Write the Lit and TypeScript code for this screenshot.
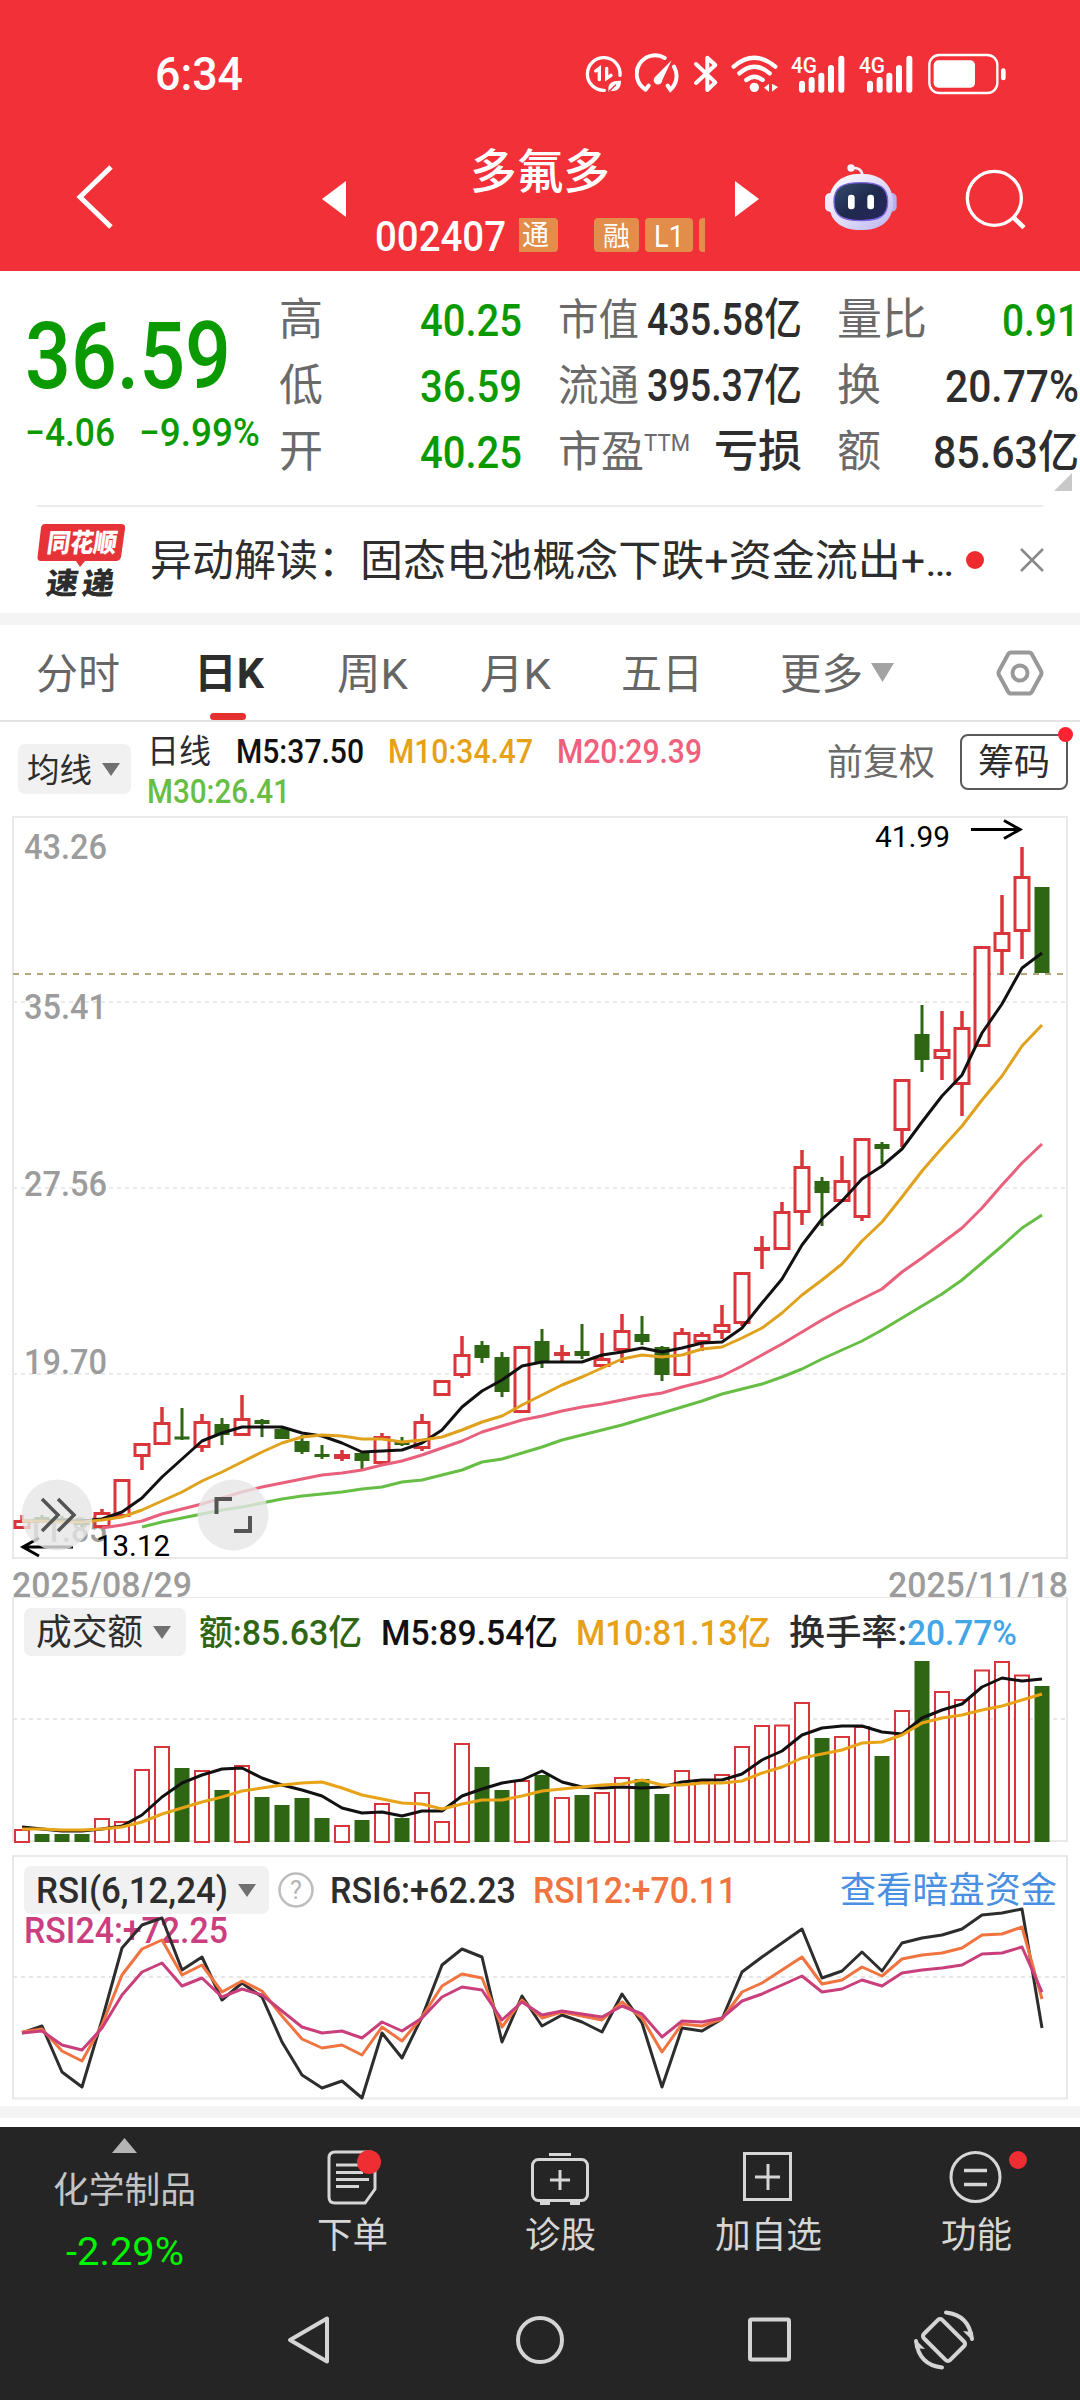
import { LitElement, html, svg, css } from "lit";
import { customElement } from "lit/decorators.js";

type Candle = [kind: "r" | "g", high: number, top: number, bottom: number, low: number];

const X0 = 22;
const STEP = 20;

/* Daily candles, in pane coordinates. */
const CANDLES: Candle[] = [
  ["r", 1515, 1520, 1529, 1529], ["g", 1515, 1517, 1520, 1522], ["g", 1516, 1518, 1520, 1523],
  ["g", 1519, 1522, 1525, 1527], ["r", 1509, 1512, 1528, 1528], ["r", 1479, 1479, 1517, 1517],
  ["r", 1443, 1443, 1457, 1470], ["r", 1407, 1422, 1445, 1445], ["g", 1408, 1436.5, 1439.5, 1440],
  ["r", 1414, 1421, 1448, 1452], ["g", 1418, 1424, 1435, 1445], ["r", 1395, 1418, 1436, 1436],
  ["g", 1419, 1420, 1424, 1437], ["g", 1428, 1429, 1439, 1439], ["g", 1435, 1441, 1452, 1454],
  ["g", 1445, 1454, 1457, 1459], ["r", 1450, 1454, 1459, 1461], ["g", 1453, 1453, 1461, 1469],
  ["r", 1433, 1436, 1464, 1464], ["g", 1437, 1442, 1445, 1446], ["r", 1414, 1421, 1449, 1451],
  ["r", 1380, 1380, 1396, 1396], ["r", 1336, 1354, 1376, 1378], ["g", 1341, 1345, 1358, 1363],
  ["g", 1352, 1357, 1392, 1397], ["r", 1346, 1346, 1413, 1413], ["g", 1329, 1341, 1363, 1368],
  ["r", 1345, 1352, 1356, 1361], ["g", 1324, 1351, 1356, 1359], ["r", 1333, 1358, 1367, 1367],
  ["r", 1314, 1330, 1351, 1363], ["g", 1316, 1334, 1342, 1345], ["g", 1346, 1347, 1375, 1381],
  ["r", 1328, 1332, 1376, 1376], ["r", 1332, 1334, 1343, 1351], ["r", 1305, 1324, 1333, 1339],
  ["r", 1272, 1272, 1324, 1326], ["r", 1236, 1247, 1251, 1269], ["r", 1202, 1211, 1250, 1250],
  ["r", 1150, 1166, 1213, 1225], ["g", 1177, 1181, 1193, 1226], ["r", 1156, 1180, 1202, 1202],
  ["r", 1138, 1138, 1218, 1221], ["g", 1142, 1144, 1149, 1164], ["r", 1079, 1079, 1131, 1147],
  ["g", 1005, 1034, 1060, 1072], ["r", 1011, 1049, 1059, 1080], ["r", 1011, 1027, 1085, 1116],
  ["r", 946, 946, 1047, 1047], ["r", 895, 932, 952, 975], ["r", 847, 876, 932, 959],
  ["g", 887, 887, 973, 973],
];

const MA5 = [1521, 1521, 1521, 1521, 1519, 1512, 1498, 1477, 1459, 1441, 1433, 1427, 1427, 1427, 1433, 1436, 1443, 1452, 1451, 1450, 1443, 1430, 1407, 1391, 1380, 1366, 1362, 1362, 1362, 1355, 1352, 1348, 1352, 1348, 1343, 1342, 1328, 1303, 1279, 1245, 1219, 1201, 1179, 1166, 1149, 1122, 1096, 1075, 1033, 1004, 968, 953];
const MA10 = [1521, 1521, 1522, 1522, 1520, 1517, 1510, 1501, 1492, 1481, 1472, 1462, 1452, 1443, 1437, 1435, 1436, 1439, 1439, 1442, 1440, 1437, 1430, 1422, 1416, 1405, 1395, 1385, 1377, 1368, 1359, 1355, 1357, 1355, 1349, 1347, 1338, 1328, 1313, 1295, 1280, 1264, 1241, 1222, 1197, 1171, 1148, 1126, 1100, 1076, 1046, 1025];
/* Starts at candle 4. */
const MA20 = [1528, 1525, 1521, 1514, 1509, 1504, 1498, 1492, 1487, 1483, 1479, 1475, 1473, 1470, 1465, 1461, 1455, 1448, 1441, 1432, 1426, 1420, 1416, 1411, 1407, 1404, 1400, 1396, 1393, 1387, 1382, 1376, 1366, 1355, 1344, 1332, 1320, 1309, 1299, 1289, 1272, 1258, 1243, 1228, 1208, 1185, 1163, 1144];
/* Starts at candle 6. */
const MA30 = [1527, 1522, 1518, 1514, 1510, 1507, 1503, 1499, 1496, 1494, 1492, 1489, 1487, 1482, 1480, 1475, 1470, 1462, 1459, 1453, 1447, 1440, 1435, 1430, 1425, 1419, 1413, 1407, 1401, 1394, 1389, 1384, 1377, 1369, 1359, 1350, 1341, 1330, 1318, 1306, 1294, 1280, 1263, 1246, 1228, 1215];

const VOL: number[] = [1829, 1834, 1834, 1834, 1818, 1821, 1769, 1746, 1768, 1770, 1790, 1765, 1797, 1805, 1798, 1818, 1825, 1820, 1803, 1818, 1792, 1821, 1743, 1767, 1790, 1780, 1775, 1797, 1795, 1792, 1777, 1779, 1794, 1770, 1780, 1774, 1746, 1725, 1724.5, 1702, 1738, 1736, 1726, 1756, 1710, 1661, 1691, 1699, 1669.5, 1661, 1674.5, 1686];
const VOL5 = [1827, 1829, 1831, 1831, 1829, 1826, 1815, 1797, 1783, 1775, 1769, 1768, 1778, 1785, 1790, 1796, 1808, 1813, 1812, 1816, 1811, 1811, 1796, 1789, 1783, 1780, 1771, 1782, 1787, 1788, 1787, 1788, 1787, 1782, 1780, 1780, 1774, 1760, 1751, 1735, 1728, 1726, 1726, 1732, 1734, 1718, 1710, 1704, 1687, 1678, 1681, 1679];
const VOL10 = [1829, 1829, 1830, 1830, 1829, 1827, 1822, 1814, 1808, 1802, 1797, 1791, 1788, 1785, 1783, 1782, 1788, 1795, 1799, 1803, 1804, 1809, 1804, 1800, 1800, 1796, 1791, 1789, 1787, 1785, 1784, 1780, 1785, 1785, 1783, 1783, 1781, 1773, 1767, 1758, 1754, 1750, 1743, 1742, 1735, 1723, 1718, 1715, 1710, 1706, 1700, 1694];

const RSI6 = [2033, 2026, 2072, 2087, 2020, 1948, 1925, 1918, 1970, 1957, 2000, 1983, 1997, 2042, 2075, 2088, 2081, 2098, 2033, 2058, 2017, 1965, 1949, 1957, 2042, 1996, 2026, 2015, 2022, 2032, 1994, 2023, 2087, 2028, 2031, 2019, 1972, 1957, 1943, 1929, 1978, 1971, 1952, 1971, 1943, 1938, 1935, 1929, 1915, 1913, 1909, 2028];
const RSI12 = [2032, 2029, 2051, 2061, 2025, 1975, 1949, 1940, 1975, 1965, 1992, 1981, 1991, 2016, 2039, 2048, 2045, 2055, 2027, 2041, 2017, 1986, 1974, 1978, 2027, 2000, 2018, 2012, 2016, 2020, 2002, 2018, 2052, 2024, 2026, 2019, 1992, 1983, 1970, 1957, 1984, 1980, 1967, 1976, 1959, 1955, 1953, 1948, 1935, 1934, 1927, 1999];
const RSI24 = [2033, 2031, 2045, 2050, 2028, 1995, 1972, 1963, 1986, 1978, 1997, 1989, 1995, 2011, 2027, 2033, 2031, 2038, 2022, 2031, 2018, 1997, 1987, 1990, 2020, 2002, 2015, 2011, 2014, 2017, 2006, 2014, 2037, 2021, 2022, 2018, 2001, 1994, 1985, 1976, 1992, 1989, 1980, 1986, 1973, 1970, 1968, 1965, 1954, 1953, 1947, 1992];

const points = (ys: number[], from = 0) =>
  ys.map((y, i) => `${X0 + STEP * (i + from)},${y}`).join(" ");

const line = (ys: number[], color: string, width: number, from = 0) =>
  svg`<polyline points=${points(ys, from)} fill="none" stroke=${color} stroke-width=${width} stroke-linejoin="round"/>`;

/* One line of text set to an exact width; colour and weight come from the class. */
const fit = (text: string, width: number, size: number, cls = "") => html`
  <svg class="fit ${cls}" width=${width} height=${size} font-size=${size}>
    <text x="0" y=${size * 0.87} textLength=${width} lengthAdjust="spacingAndGlyphs">${text}</text>
  </svg>`;

const label = (text: string, x: number, y: number, width: number, size: number, color: string, weight = 500) =>
  svg`<text x=${x} y=${y} textLength=${width} lengthAdjust="spacingAndGlyphs" font-size=${size} font-weight=${weight} fill=${color}>${text}</text>`;

const gap = (width: number) => html`<svg width=${width} height="1"></svg>`;

const RED = "#d9363b";
const GREEN = "#2f6614";

@customElement("app-root")
export class AppRoot extends LitElement {
  static styles = css`
    :host {
      display: block;
      width: 1080px;
      height: 2400px;
      overflow: hidden;
      background: #fff;
      color: #2d2d2d;
      font-family: Roboto, "Noto Sans CJK SC", sans-serif;
    }
    svg { display: block; flex: none; }
    text { font-family: Roboto, "Noto Sans CJK SC", sans-serif; white-space: pre; }
    .fit { overflow: visible; fill: currentColor; font-weight: 400; }
    .m { font-weight: 500; }
    .b { font-weight: 700; }
    .green { color: #0a9a00; }
    .grey { color: #6a6a6a; }
    .ink { color: #111; }
    .gold { color: #e6a117; }
    .pink { color: #ef607c; }
    .lime { color: #67be45; }
    .forest { color: #2f6614; }
    .sky { color: #41a5e6; }
    .orange { color: #f07340; }
    .link { color: #4a90e2; }
    .row { display: flex; align-items: center; }

    .top { height: 271px; background: #f23037; color: #fff; }
    .status { height: 98px; padding: 50px 73px 0 155px; box-sizing: border-box; justify-content: space-between; }
    .time { margin-top: -3px; }
    .icons { display: flex; gap: 11px; }
    .title { height: 173px; box-sizing: border-box; padding: 24px 0 0 75px; }
    .prev { margin-left: 207px; margin-top: 5px; }
    .next { margin-left: 29px; margin-top: 5px; }
    .name { width: 331px; height: 104px; margin: 7px 0 0 29px; display: flex; flex-direction: column; justify-content: space-between; align-items: center; }
    .name > .fit { margin-left: -2px; margin-top: -1px; }
    .code { width: 331px; margin-bottom: -4px; }
    .tags { margin-left: 13px; width: 186px; height: 34px; overflow: hidden; }
    .tag { flex: none; height: 34px; background: #e38d4b; border-radius: 4px; display: flex; align-items: center; justify-content: center; }
    .tag.cut { width: 39px; border-radius: 0 4px 4px 0; }
    .tag.cut .fit { margin-right: 6px; }
    .tag.rong { width: 45px; margin-left: 36px; }
    .tag.level { width: 48px; margin-left: 6px; }
    .tag.rest { width: 12px; margin-left: 6px; }
    .robot { margin-left: 64px; }
    .search { margin-left: 65px; margin-top: 5px; }

    .quote { height: 234px; display: grid; grid-template-columns: 279px 243px 36px 244px 35px 242px; box-sizing: border-box; padding-top: 15px; }
    .price { padding: 22px 0 0 25px; }
    .change { margin-top: 12px; gap: 24px; }
    .pair { height: 66px; display: flex; align-items: center; justify-content: space-between; }
    .c3 { grid-column: 4; }
    .c4 { grid-column: 6; }
    .pe { display: flex; align-items: flex-start; }
    .more { display: flex; justify-content: flex-end; padding-right: 7px; margin-top: -11px; }

    .news { height: 106px; margin: 0 37px; border-top: 2px solid #ececec; }
    .news .head { margin-left: 24px; display: flex; }
    .dot { width: 18px; height: 18px; flex: none; border-radius: 50%; background: #f02b2f; margin-left: 12px; }
    .close { margin-left: 35px; }
    .band { height: 12px; background: #f4f4f4; }

    .tabs { height: 97px; box-sizing: border-box; border-bottom: 2px solid #e3e3e3; display: flex; padding-left: 36px; }
    .tab { display: flex; align-items: center; color: #666; flex: none; }
    .w160 { width: 158px; }
    .w141 { width: 141px; }
    .on { width: 143px; }
    .w143 { width: 143px; }
    .w159 { width: 159px; }
    .w214 { width: 215px; }
    .tab.on { color: #2d2d2d; flex-direction: column; align-items: flex-start; box-sizing: border-box; padding-top: 26px; }
    .bar { width: 36px; height: 9px; border-radius: 5px; background: #e53030; margin: 20px 0 0 16px; }
    .caret { margin-left: 8px; }

    .ma { height: 94px; box-sizing: border-box; display: flex; padding: 12px 12px 0 18px; }
    .pick { display: flex; align-items: center; background: #f1f1f1; border-radius: 7px; box-sizing: border-box; }
    .ma .pick { width: 113px; height: 50px; margin-top: 10px; padding-left: 9px; }
    .ma .pick .caret { margin-left: 10px; }
    .values { flex: 1; padding-left: 16px; margin-top: -4px; }
    .values .row { height: 41px; }
    .values .low { height: 39px; }
    .right { display: flex; align-items: center; height: 55px; }
    .chips { width: 108px; height: 56px; box-sizing: border-box; border: 2px solid #5a5a5a; border-radius: 8px; display: grid; place-items: center; position: relative; margin-left: 25px; }
    .chips::after { content: ""; position: absolute; right: -7px; top: -9px; width: 15px; height: 15px; border-radius: 50%; background: #ff2331; }

    .pane { display: grid; }
    .pane > * { grid-area: 1 / 1; }
    .legend { display: flex; align-items: center; align-self: start; padding: 11px 0 0 24px; height: 48px; }
    .legend .pick { height: 48px; padding-left: 12px; }
    .vol { width: 162px; }
    .rsi { width: 245px; }

    .bottom { height: 273px; background: #252525; color: #d6d6d6; }
    .actions { height: 141px; display: grid; grid-template-columns: 248px repeat(4, 208px); }
    .act { display: flex; flex-direction: column; align-items: center; padding-top: 20px; gap: 10px; }
    .sector { padding-top: 11px; gap: 0; color: #c4c4c4; }
    .sector .board { margin-top: 19px; }
    .drop { color: #00f500; margin: 24px 0 0 2px; }
    .nav { height: 132px; display: flex; padding: 12px 0 0 284px; align-items: center; box-sizing: border-box; }
    .nav .home { margin-left: 181px; }
    .nav .recent { margin-left: 179px; }
    .nav .rotate { margin-left: 118px; }
  `;

  private statusIcons() {
    const signal = svg`
      <text x="0" y="61" textLength="78" lengthAdjust="spacingAndGlyphs" font-size="68" font-weight="500" fill="#fff">4G</text>
      <g stroke="#fff" stroke-width="18" stroke-linecap="round">
        <path d="M33 92V110M62 81V110M91 68V110M120 45V110M151 17V110"/>
      </g>`;
    return html`<div class="icons">
      <svg width="40" height="42" viewBox="45 36 120 126" fill="none" stroke="#fff" stroke-width="10" stroke-linecap="round">
        <path d="M106 148A49 49 0 1 1 153 103"/>
        <path d="M80 90L91 82V116M113 82V112L126 103" stroke-width="10"/>
        <path d="M119 152C114 126 130 118 156 119C156 142 144 153 126 149Z" fill="#fff" stroke="none"/>
        <path d="M121 150L140 132" stroke="#f23037" stroke-width="4"/>
      </svg>
      <svg width="46" height="42" viewBox="195 36 138 126" fill="none" stroke="#fff" stroke-width="12" stroke-linecap="round">
        <path d="M227 146L236 134M227 146A55 55 0 0 1 284 51M312 77A55 55 0 0 1 301 146L293 134"/>
        <path d="M305 58L255 108A13 13 0 1 0 277 117Z" fill="#fff" stroke="none"/>
      </svg>
      <svg width="27" height="42" viewBox="363 36 81 126" fill="none" stroke="#fff" stroke-width="12" stroke-linejoin="round" stroke-linecap="round">
        <path d="M375 69L433 124L409 147V50L433 72L375 126"/>
      </svg>
      <svg width="50" height="42" viewBox="480 36 150 126" fill="none" stroke="#fff" stroke-width="13" stroke-linecap="round">
        <path d="M491 77Q553 24 616 77M508 97Q553 57 599 97M529 117Q553 97 578 117"/>
        <circle cx="553" cy="139" r="14" fill="#fff" stroke="none"/>
        <path d="M597 128V152L582 140ZM606 128L624 138L606 152Z" fill="#fff" stroke="none"/>
      </svg>
      <svg width="57" height="42" viewBox="0 0 171 126">${signal}</svg>
      <svg width="57" height="42" viewBox="0 0 171 126">${signal}</svg>
      <svg width="80" height="42" viewBox="1071 36 240 126">
        <rect x="1078" y="42" width="204" height="114" rx="30" fill="none" stroke="#fff" stroke-width="7"/>
        <rect x="1091" y="58" width="124" height="82" rx="14" fill="#fff"/>
        <rect x="1293" y="82" width="14" height="36" rx="7" fill="#fff"/>
      </svg>
    </div>`;
  }

  private header() {
    return html`<header class="top">
      <div class="status row"><div class="time">${fit("6:34", 88, 47, "m")}</div>${this.statusIcons()}</div>
      <div class="title row">
        <svg width="40" height="66" viewBox="0 0 40 66" fill="none" stroke="#fff" stroke-width="5"><path d="M36 3L5 33L36 63"/></svg>
        <svg class="prev" width="24" height="36" viewBox="0 0 24 36" fill="#fff"><path d="M24 0V36L0 18Z"/></svg>
        <div class="name">
          ${fit("多氟多", 140, 47, "m")}
          <div class="code row">
            ${fit("002407", 131, 42, "m")}
            <div class="tags row">
              <div class="tag cut">${fit("通", 27, 28)}</div>
              <div class="tag rong">${fit("融", 27, 27)}</div>
              <div class="tag level">${fit("L1", 30, 31)}</div>
              <div class="tag rest"></div>
            </div>
          </div>
        </div>
        <svg class="next" width="24" height="36" viewBox="0 0 24 36" fill="#fff"><path d="M0 0V36L24 18Z"/></svg>
        <svg class="robot" width="76" height="68" viewBox="759 366 228 204">
          <defs>
            <linearGradient id="shell" x1="0" y1="0" x2="1" y2="1">
              <stop offset="0" stop-color="#fff"/><stop offset=".5" stop-color="#e2defa"/><stop offset="1" stop-color="#b9b4ee"/>
            </linearGradient>
            <linearGradient id="visor" x1="0" y1="0" x2="1" y2="1">
              <stop offset="0" stop-color="#334c6e"/><stop offset=".5" stop-color="#1f2a4e"/><stop offset="1" stop-color="#26265c"/>
            </linearGradient>
          </defs>
          <path d="M843 381Q876 378 877 404" fill="none" stroke="#f1edff" stroke-width="8"/>
          <circle cx="843" cy="381" r="11" fill="#f6f2ff"/>
          <rect x="765" y="456" width="34" height="56" rx="15" fill="#eeeaff"/>
          <rect x="946" y="456" width="34" height="56" rx="15" fill="#b7b0f0"/>
          <path d="M873 398C938 398 969 436 969 485C969 540 932 567 873 567C814 567 777 540 777 485C777 436 808 398 873 398Z" fill="url(#shell)"/>
          <path d="M873 425C930 425 953 440 953 482C953 524 930 539 873 539C816 539 792 524 792 482C792 440 816 425 873 425Z" fill="url(#visor)" stroke="#7a63e0" stroke-width="4"/>
          <rect x="834" y="461" width="20" height="44" rx="9" fill="#fff"/><rect x="892" y="461" width="20" height="44" rx="9" fill="#fff"/>
        </svg>
        <svg class="search" width="64" height="63" viewBox="1182 381 192 189" fill="none" stroke="#fff">
          <circle cx="1273" cy="472" r="81" stroke-width="10"/><path d="M1329 528L1362 560" stroke-width="14"/>
        </svg>
      </div>
    </header>`;
  }

  private quote() {
    return html`<section class="quote">
      <div class="price green">
        ${fit("36.59", 206, 92, "m")}
        <div class="change row">${fit("−4.06", 90, 39, "m")}${fit("−9.99%", 121, 39, "m")}</div>
      </div>
      <div>
        <div class="pair">${fit("高", 44, 44, "grey")}${fit("40.25", 102, 45, "m green")}</div>
        <div class="pair">${fit("低", 44, 44, "grey")}${fit("36.59", 102, 45, "m green")}</div>
        <div class="pair">${fit("开", 44, 44, "grey")}${fit("40.25", 102, 45, "m green")}</div>
      </div>
      <div class="c3">
        <div class="pair">${fit("市值", 81, 43, "grey")}${fit("435.58亿", 155, 44, "m")}</div>
        <div class="pair">${fit("流通", 81, 43, "grey")}${fit("395.37亿", 155, 44, "m")}</div>
        <div class="pair"><span class="pe">${fit("市盈", 86, 43, "grey")}${fit("TTM", 46, 24, "grey")}</span>${fit("亏损", 88, 44, "m")}</div>
      </div>
      <div class="c4">
        <div class="pair">${fit("量比", 90, 44, "grey")}${fit("0.91", 77, 45, "m green")}</div>
        <div class="pair">${fit("换", 44, 44, "grey")}${fit("20.77%", 134, 45, "m")}</div>
        <div class="pair">${fit("额", 44, 44, "grey")}${fit("85.63亿", 146, 45, "m")}</div>
        <div class="more"><svg width="18" height="18" viewBox="0 0 18 18" fill="#c9c9c9"><path d="M18 0V18H0Z"/></svg></div>
      </div>
    </section>`;
  }

  private news() {
    return html`<section class="news row">
      <svg width="89" height="74" viewBox="0 0 89 74">
        <path d="M7 1H84Q89 1 88 6L84 34Q83 38 79 38H48L43 44L39 38H4Q0 38 0.500 34L4 5Q4.500 1 8 1Z" fill="#e63338"/>
        <g transform="skewX(-8)">
          <text x="13" y="29" textLength="70" lengthAdjust="spacingAndGlyphs" font-size="26" font-weight="900" fill="#fff">同花顺</text>
          <text x="18" y="71" textLength="32" lengthAdjust="spacingAndGlyphs" font-size="30" font-weight="900" fill="#2d2d2d">速</text>
          <text x="54" y="71" textLength="32" lengthAdjust="spacingAndGlyphs" font-size="30" font-weight="900" fill="#2d2d2d">递</text>
        </g>
      </svg>
      <span class="head">${fit("异动解读：", 210, 43)}${fit("固态电池概念下跌+资金流出+…", 594, 43)}</span>
      <i class="dot"></i>
      <svg class="close" width="26" height="26" viewBox="0 0 26 26" stroke="#8a8a8a" stroke-width="2.5"><path d="M2 2L24 24M24 2L2 24"/></svg>
    </section>`;
  }

  private tabs() {
    return html`<nav class="tabs">
      <div class="tab w160">${fit("分时", 84, 42)}</div>
      <div class="tab on">${fit("日K", 70, 42, "b")}<i class="bar"></i></div>
      <div class="tab w143">${fit("周K", 71, 42)}</div>
      <div class="tab w141">${fit("月K", 71, 42)}</div>
      <div class="tab w159">${fit("五日", 82, 42)}</div>
      <div class="tab w214">${fit("更多", 83, 42)}
        <svg class="caret" width="23" height="19" viewBox="0 0 23 19" fill="#a3a3a3"><path d="M0 0H23L11.500 19Z"/></svg></div>
      <div class="tab">
        <svg width="50" height="50" viewBox="0 0 50 50" fill="none" stroke="#999" stroke-width="4">
          <path d="M16 4.500H34Q36 4.500 37 6.500L46 23Q47 25 46 27L37 43.500Q36 45.500 34 45.500H16Q14 45.500 13 43.500L4 27Q3 25 4 23L13 6.500Q14 4.500 16 4.500Z"/><circle cx="25" cy="25" r="7.500"/>
        </svg>
      </div>
    </nav>`;
  }

  private caret() {
    return html`<svg class="caret" width="18" height="13" viewBox="0 0 18 13" fill="#707070"><path d="M0 0H18L9 13Z"/></svg>`;
  }

  private averages() {
    return html`<section class="ma">
      <div class="pick">${fit("均线", 65, 33)}${this.caret()}</div>
      <div class="values">
        <div class="row">
          ${fit("日线", 64, 33)}
          ${gap(25)}${fit("M5:37.50", 128, 33.5, "ink m")}
          ${gap(24)}${fit("M10:34.47", 145, 33.5, "gold m")}
          ${gap(24)}${fit("M20:29.39", 145, 33.5, "pink m")}
        </div>
        <div class="row low">${fit("M30:26.41", 143, 33.5, "lime m")}</div>
      </div>
      <div class="right">
        ${fit("前复权", 108, 36, "grey")}
        <div class="chips">${fit("筹码", 72, 36)}</div>
      </div>
    </section>`;
  }

  private priceChart() {
    const axis = "#9c9c9c";
    return html`<svg width="1080" height="781" viewBox="0 816 1080 781">
      <rect x="13" y="817" width="1054" height="741" fill="none" stroke="#e9e9e9" stroke-width="2"/>
      <path d="M13 1002H1067M13 1188H1067M13 1374H1067" stroke="#e9e9e9" stroke-width="2" stroke-dasharray="4 4"/>
      <path d="M13 974H1067" stroke="#b3a57a" stroke-width="2" stroke-dasharray="6 6"/>
      ${label("43.26", 24, 858.5, 83, 35, axis)}
      ${label("35.41", 24, 1019, 83, 35, axis)}
      ${label("27.56", 24, 1196, 83, 35, axis)}
      ${label("19.70", 24, 1373.5, 83, 35, axis)}
      ${label("11.85", 26, 1542, 81, 35, axis)}
      ${CANDLES.map(([kind, high, top, bottom, low], i) => {
        const x = X0 + STEP * i;
        if (kind === "g") {
          return svg`<path d="M${x} ${high}V${low}" stroke=${GREEN} stroke-width="3"/>
            <rect x=${x - 7.5} y=${top} width="15" height=${bottom - top} fill=${GREEN}/>`;
        }
        const solid = bottom - top < 6;
        return svg`<path d="M${x} ${high}V${solid ? low : top}M${x} ${bottom}V${low}" stroke=${RED} stroke-width="3.500"/>
          ${solid
            ? svg`<rect x=${x - 8} y=${top} width="16" height=${bottom - top} fill=${RED}/>`
            : svg`<rect x=${x - 7} y=${top + 1.5} width="14" height=${bottom - top - 3} fill="#fff" stroke=${RED} stroke-width="3"/>`}`;
      })}
      ${line(MA30, "#67be45", 3, 6)}
      ${line(MA20, "#e9607c", 3, 4)}
      ${line(MA5, "#111", 3)}
      ${line(MA10, "#e0a11c", 3)}
      <path d="M22 1547H73M39 1538L23 1547L39 1556" fill="none" stroke="#000" stroke-width="3"/>
      <circle cx="57" cy="1515" r="35.500" fill="#e6e6e6" fill-opacity=".8"/>
      <circle cx="233" cy="1515" r="35.500" fill="#e6e6e6" fill-opacity=".8"/>
      <path d="M42 1499L58 1515L42 1531M58 1499L74 1515L58 1531" fill="none" stroke="#555" stroke-width="3.500"/>
      <path d="M216.500 1514V1499H232M250 1516V1531H234" fill="none" stroke="#555" stroke-width="4"/>
      ${label("13.12", 96, 1556, 74, 30, "#000", 400)}
      ${label("41.99", 875, 846.5, 75, 30, "#000", 400)}
      <path d="M971 829.500H1020M1004 820.500L1020 829.500L1004 838.500" fill="none" stroke="#000" stroke-width="3"/>
      ${label("2025/08/29", 12, 1596.5, 180, 35, axis)}
      ${label("2025/11/18", 888, 1596.5, 180, 35, axis)}
    </svg>`;
  }

  private volume() {
    return html`<section class="pane">
      <svg width="1080" height="258" viewBox="0 1597 1080 258">
        <rect x="13" y="1597" width="1054" height="244" fill="none" stroke="#e9e9e9" stroke-width="2"/>
        <path d="M13 1719H1067" stroke="#e6e6e6" stroke-width="2" stroke-dasharray="4 4"/>
        ${VOL.map((top, i) => {
          const x = X0 + STEP * i;
          return CANDLES[i][0] === "g"
            ? svg`<rect x=${x - 7.5} y=${top} width="15" height=${1842 - top} fill=${GREEN}/>`
            : svg`<rect x=${x - 7} y=${top + 1} width="14" height=${1841 - top} fill="#fff" stroke=${RED} stroke-width="2"/>`;
        })}
        ${line(VOL5, "#111", 3)}
        ${line(VOL10, "#e8a317", 3)}
      </svg>
      <div class="legend">
        <div class="pick vol">${fit("成交额", 107, 36)}${gap(10)}<svg width="18" height="13" viewBox="0 0 18 13" fill="#707070"><path d="M0 0H18L9 13Z"/></svg></div>
        ${gap(13)}${fit("额:85.63亿", 163, 35.5, "forest m")}
        ${gap(19)}${fit("M5:89.54亿", 177, 35.5, "ink m")}
        ${gap(18)}${fit("M10:81.13亿", 195, 35.5, "gold m")}
        ${gap(18)}${fit("换手率:", 118, 35.5, "m")}${fit("20.77%", 110, 35.5, "sky m")}
      </div>
    </section>`;
  }

  private rsi() {
    return html`<section class="pane">
      <svg width="1080" height="251" viewBox="0 1855 1080 251">
        <rect x="13" y="1856" width="1054" height="242.500" fill="none" stroke="#e9e9e9" stroke-width="2"/>
        <path d="M13 1977H1067" stroke="#e6e6e6" stroke-width="2" stroke-dasharray="4 4"/>
        ${label("RSI24:+72.25", 24, 1943, 204, 36, "#cc3f7e")}
        ${line(RSI6, "#2d2d2d", 3)}
        ${line(RSI12, "#f07340", 3)}
        ${line(RSI24, "#c93f7c", 3)}
      </svg>
      <div class="legend">
        <div class="pick rsi">${fit("RSI(6,12,24)", 192, 36, "m")}${gap(10)}<svg width="18" height="13" viewBox="0 0 18 13" fill="#707070"><path d="M0 0H18L9 13Z"/></svg></div>
        ${gap(9)}
        <svg width="36" height="36" viewBox="0 0 36 36"><circle cx="18" cy="18" r="16.500" fill="none" stroke="#bdbdbd" stroke-width="2.500"/>
          <text x="18" y="27" text-anchor="middle" font-size="25" fill="#b3b3b3">?</text></svg>
        ${gap(16)}${fit("RSI6:+62.23", 186, 36, "m")}
        ${gap(17)}${fit("RSI12:+70.11", 204, 36, "orange m")}
        ${gap(103)}${fit("查看暗盘资金", 217, 36, "link")}
      </div>
    </section>`;
  }

  private bottom() {
    return html`<footer class="bottom">
      <div class="actions">
        <div class="act sector">
          <svg width="25" height="15" viewBox="0 0 25 15" fill="#b5b5b5"><path d="M12.500 0L25 15H0Z"/></svg>
          <span class="board">${fit("化学制品", 143, 36)}</span>
          <span class="drop">${fit("-2.29%", 118, 38)}</span>
        </div>
        <div class="act">
          <svg width="60" height="60" viewBox="-1 0 60 60" fill="none" stroke="#d6d6d6" stroke-width="3">
            <path d="M12 5H46Q52 5 52 11V42L42 56H12Q6 56 6 50V11Q6 5 12 5Z"/>
            <path d="M13 18H40M13 25.500H40M13 32.500H46M13 39.500H36"/>
            <circle cx="46" cy="15" r="12" fill="#ee2e33" stroke="none"/>
          </svg>${fit("下单", 71, 36)}
        </div>
        <div class="act">
          <svg width="60" height="60" viewBox="0 0 60 60" fill="none" stroke="#d6d6d6" stroke-width="3">
            <path d="M19 7.500H41"/><rect x="2.500" y="12.500" width="55" height="41" rx="6"/>
            <path d="M30 23V43M20 33H40"/><path d="M10 56H20M40 56H50" stroke-width="4"/>
          </svg>${fit("诊股", 71, 36)}
        </div>
        <div class="act">
          <svg width="60" height="60" viewBox="0 0 60 60" fill="none" stroke="#d6d6d6" stroke-width="3">
            <rect x="6.500" y="6.500" width="46" height="46"/><path d="M30 17V43M17 30H42"/>
          </svg>${fit("加自选", 107, 36)}
        </div>
        <div class="act">
          <svg width="108" height="60" viewBox="-24 0 108 60" fill="none" stroke="#d6d6d6" stroke-width="3">
            <circle cx="29.500" cy="30" r="24.500"/><path d="M18 23.500H41M18 37.500H41" stroke-width="3.500"/>
            <circle cx="72" cy="13" r="9" fill="#ee2e33" stroke="none"/>
          </svg>${fit("功能", 71, 36)}
        </div>
      </div>
      <div class="nav">
        <svg width="50" height="60" viewBox="0 0 50 60" fill="none" stroke="#d4d4d4" stroke-width="4" stroke-linejoin="round"><path d="M43 8.500V51.500L6 30Z"/></svg>
        <svg class="home" width="50" height="60" viewBox="0 0 50 60" fill="none" stroke="#d4d4d4" stroke-width="4"><circle cx="25" cy="30" r="22"/></svg>
        <svg class="recent" width="50" height="60" viewBox="0 0 50 60" fill="none" stroke="#d4d4d4" stroke-width="4"><rect x="6" y="9.500" width="39" height="40" rx="1.500"/></svg>
        <svg class="rotate" width="64" height="64" viewBox="0 0 64 64" fill="none" stroke="#d4d4d4" stroke-width="4">
          <rect x="19" y="13.500" width="26" height="37" rx="3" transform="rotate(-45 32 32)"/>
          <path d="M34 4.500Q57 7 60 31M30 59.500Q7 57 4 33" stroke-linecap="round"/>
          <path d="M61 33L51 23L61 24ZM3 31L13 41L3 40Z" fill="#d4d4d4" stroke="none"/>
        </svg>
      </div>
    </footer>`;
  }

  render() {
    return html`
      ${this.header()} ${this.quote()} ${this.news()}
      <div class="band"></div>
      ${this.tabs()} ${this.averages()} ${this.priceChart()} ${this.volume()} ${this.rsi()}
      <div class="band"></div>
      <svg width="1080" height="9"></svg>
      ${this.bottom()}
    `;
  }
}
